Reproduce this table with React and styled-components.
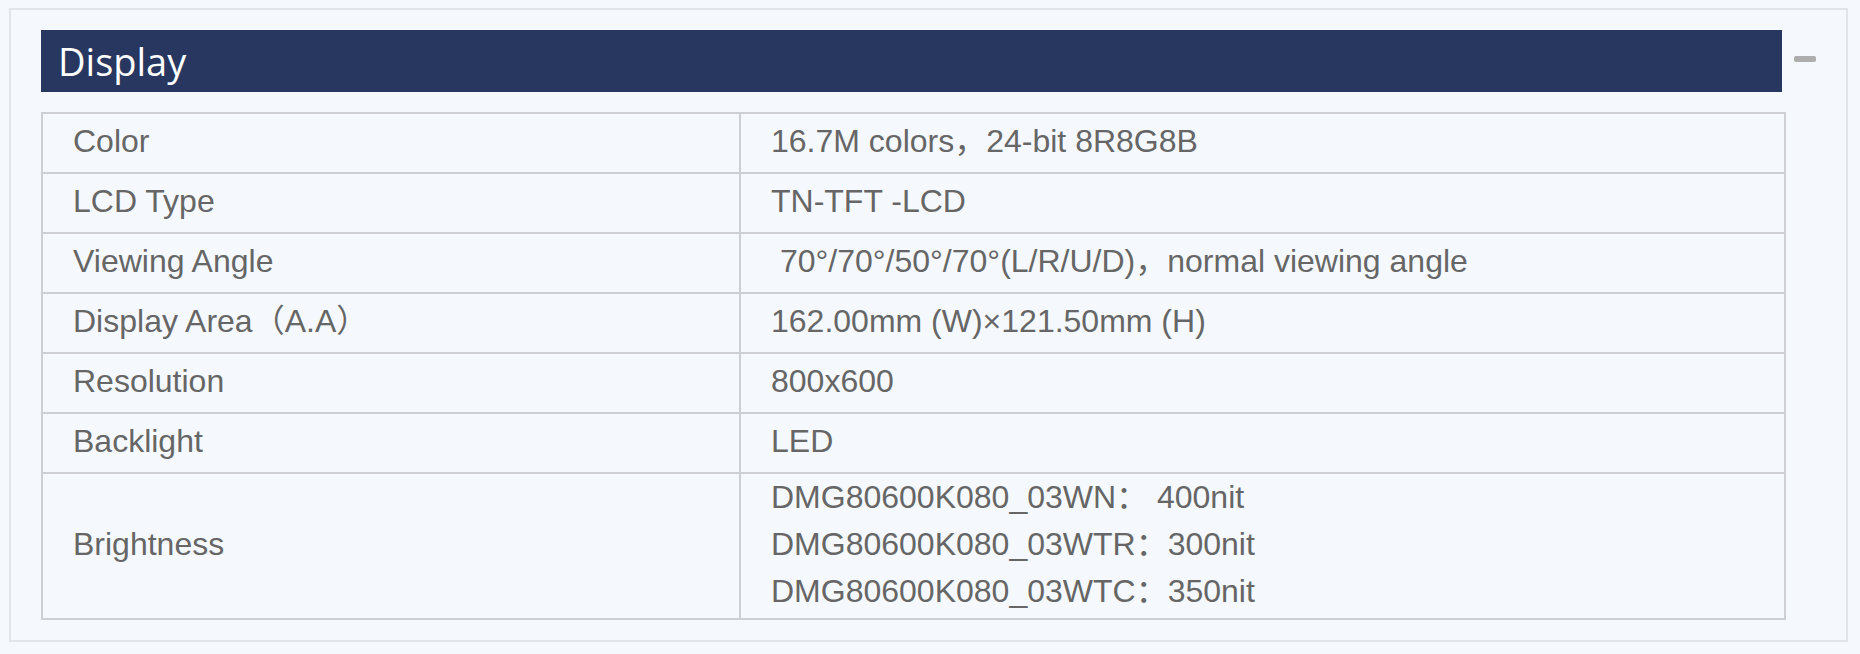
import React from "react";
import styled, { createGlobalStyle } from "styled-components";

const GlobalStyle = createGlobalStyle`
  html, body {
    margin: 0;
    padding: 0;
    background: #f5f9fd;
  }
  body {
    font-family: "Liberation Sans", Arial, "Noto Sans CJK SC", sans-serif;
  }
  * { box-sizing: border-box; }
`;

const Page = styled.div`
  width: 1860px;
  padding: 8px 12px 12px 9px;
  background: #f5f9fd;
`;

const Panel = styled.section`
  border: 2px solid #e1e4e8;
  background: #f5f9fd;
  padding: 20px 60px 20px 30px;
  display: flex;
  flex-direction: column;
  gap: 20px;
`;

const HeadRow = styled.div`
  display: flex;
  margin-right: -60px;
`;

const TitleBar = styled.h2`
  flex: 1;
  margin: 0;
  height: 62px;
  background: #283760;
  color: #ffffff;
  font-family: "Open Sans", "Noto Sans", sans-serif;
  font-weight: 400;
  font-size: 38px;
  line-height: 62px;
  padding-left: 17px;
`;

const Toggle = styled.button`
  width: 64px;
  align-self: flex-start;
  background: transparent;
  border: 0;
  padding: 26px 0 0 12px;
  cursor: pointer;
  display: flex;
`;

const MinusBar = styled.span`
  display: block;
  width: 22px;
  height: 6px;
  border-radius: 2px;
  background: #adadad;
`;

const SpecTable = styled.div`
  display: grid;
  grid-template-columns: 698px 1fr;
  border-top: 2px solid #cdcfd2;
  border-left: 2px solid #cdcfd2;
`;

const Cell = styled.div`
  min-height: 60px;
  padding: 0 29px 3px 30px;
  border-right: 2px solid #cdcfd2;
  border-bottom: 2px solid #cdcfd2;
  display: flex;
  flex-direction: column;
  justify-content: center;
  color: #666666;
  font-family: "Liberation Sans", Arial, "Noto Sans CJK SC", sans-serif;
  font-size: 32px;
  line-height: 47px;
  white-space: pre;
`;

const Line = styled.span`
  display: block;
`;

const rows = [
  ["Color", ["16.7M colors，24-bit 8R8G8B"]],
  ["LCD Type", ["TN-TFT -LCD"]],
  ["Viewing Angle", [" 70°/70°/50°/70°(L/R/U/D)，normal viewing angle"]],
  ["Display Area（A.A）", ["162.00mm (W)×121.50mm (H)"]],
  ["Resolution", ["800x600"]],
  ["Backlight", ["LED"]],
  [
    "Brightness",
    [
      "DMG80600K080_03WN： 400nit",
      "DMG80600K080_03WTR：300nit",
      "DMG80600K080_03WTC：350nit",
    ],
  ],
];

export default function App() {
  return (
    <>
      <GlobalStyle />
      <Page>
        <Panel>
          <HeadRow>
            <TitleBar>Display</TitleBar>
            <Toggle aria-label="collapse">
              <MinusBar />
            </Toggle>
          </HeadRow>
          <SpecTable>
            {rows.map(([label, values]) => (
              <React.Fragment key={label}>
                <Cell>{label}</Cell>
                <Cell>
                  {values.map((v) => (
                    <Line key={v}>{v}</Line>
                  ))}
                </Cell>
              </React.Fragment>
            ))}
          </SpecTable>
        </Panel>
      </Page>
    </>
  );
}
